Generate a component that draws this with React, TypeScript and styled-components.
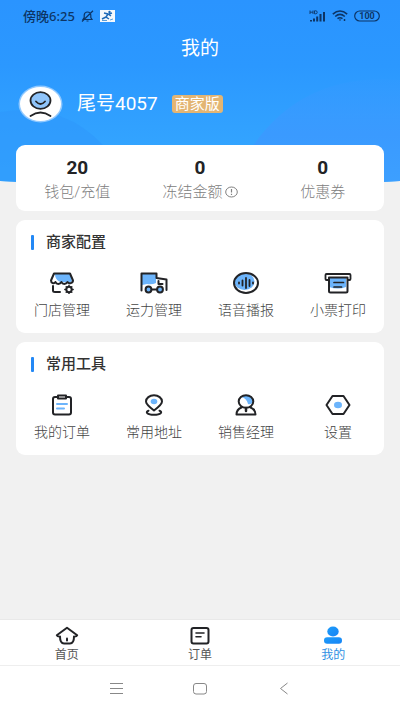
import React from "react";
import styled, { createGlobalStyle } from "styled-components";

const INK = "#222326";
const SKY = "#6cb4fb";

const GlobalStyle = createGlobalStyle`
  * { box-sizing: border-box; }
  body {
    margin: 0;
    background: #f1f1f1;
    font-family: Roboto, "Noto Sans CJK SC", sans-serif;
    -webkit-font-smoothing: antialiased;
  }
  button { font: inherit; color: inherit; background: none; border: 0; padding: 0; cursor: pointer; }
  svg { display: block; }
`;

const Screen = styled.div`
  position: relative;
  display: flex;
  flex-direction: column;
  min-height: 100vh;
`;

const Backdrop = styled.svg`
  position: absolute;
  top: 0;
  left: 0;
  width: 100%;
  height: 188px;
`;

const StatusBar = styled.div`
  position: relative;
  display: flex;
  justify-content: space-between;
  align-items: center;
  height: 32px;
  padding: 0 20px 0 23px;
  color: #0d3566;
`;

const StatusGroup = styled.div`
  display: flex;
  align-items: center;
  gap: 6px;
`;

const Clock = styled.span`
  font-family: "Noto Sans", "Noto Sans CJK SC", sans-serif;
  font-size: 13px;
  line-height: 16px;
  font-weight: 500;
`;

const TitleBar = styled.h1`
  position: relative;
  margin: 0;
  height: 32px;
  text-align: center;
  font-size: 19px;
  line-height: 34px;
  font-weight: 400;
  color: #fff;
`;

const Profile = styled.section`
  position: relative;
  display: flex;
  align-items: center;
  height: 80px;
  padding: 0 18px;
`;

const UserName = styled.span`
  margin-left: 14px;
  font-size: 19px;
  line-height: 24px;
  color: #fff;
`;

const Badge = styled.span`
  margin-left: 14px;
  padding: 0 3px;
  border-radius: 3px;
  background: #e3b573;
  color: #fff;
  font-size: 15px;
  line-height: 18px;
`;

const Content = styled.main`
  position: relative;
  flex: 1;
  display: flex;
  flex-direction: column;
  gap: 9px;
  padding: 1px 16px 16px;
`;

const Card = styled.section`
  border-radius: 9px;
  background: #fff;
`;

const StatsCard = styled(Card)`
  display: grid;
  grid-template-columns: repeat(3, 1fr);
  padding: 12px 0 9px;
`;

const Stat = styled.button`
  display: flex;
  flex-direction: column;
  align-items: center;
  gap: 3px;
`;

const StatValue = styled.span`
  font-size: 19px;
  line-height: 22px;
  font-weight: 700;
  color: ${INK};
`;

const StatLabel = styled.span`
  display: flex;
  align-items: center;
  gap: 2px;
  font-size: 15px;
  line-height: 20px;
  font-weight: 300;
  color: #808080;
`;

const GroupCard = styled(Card)`
  padding: 12px 0 14px;
`;

const GroupTitle = styled.h2`
  display: flex;
  align-items: center;
  gap: 12px;
  margin: 0;
  padding-left: 15px;
  font-size: 15px;
  line-height: 20px;
  font-weight: 500;
  color: #333;
  &::before {
    content: "";
    width: 3px;
    height: 15px;
    border-radius: 1px;
    background: #2388f5;
  }
`;

const Tools = styled.div`
  display: grid;
  grid-template-columns: repeat(4, 1fr);
  padding-top: 20px;
`;

const Tool = styled.button`
  display: flex;
  flex-direction: column;
  align-items: center;
  gap: 7px;
  font-size: 14px;
  line-height: 18px;
  font-weight: 300;
  color: #444;
`;

const TabBar = styled.nav`
  position: relative;
  display: grid;
  grid-template-columns: repeat(3, 1fr);
  height: 47px;
  border-top: 1px solid #e9e9e9;
  border-bottom: 1px solid #eee;
  background: #fff;
`;

const Tab = styled.button<{ $active?: boolean }>`
  display: flex;
  flex-direction: column;
  align-items: center;
  gap: 1px;
  padding-top: 6px;
  font-size: 12px;
  line-height: 16px;
  color: ${(p) => (p.$active ? "#2f8fe3" : "#555")};
`;

const SystemBar = styled.nav`
  position: relative;
  display: flex;
  justify-content: center;
  align-items: center;
  gap: 60px;
  height: 45px;
  background: #fff;
`;

const line = {
  fill: "none",
  stroke: INK,
  strokeWidth: 2,
  strokeLinecap: "round" as const,
  strokeLinejoin: "round" as const,
};

const toolIcons: Record<string, React.ReactNode> = {
  store: (
    <>
      <path d="M6 2h16l2 7c-2 2-4 2-6 1-4 1-10 0-11-7z" fill={SKY} />
      <path d="M6 1.500h16l3 7c0 2.500-4 4-5.500 1.500-1.500 2.500-5 2.500-6 0-1.500 2.500-5 2.500-6 0C6 12.500 3 11 3 8.500z" {...line} />
      <path d="M5 14v4.500Q5 20 7 20h5" {...line} />
      <circle cx="21" cy="17.500" r="2.700" {...line} />
      <path d="M21 13.200v1M21 20.800v1M16.800 17.500h1M24.200 17.500h1M18.200 14.700l.6.600M23.200 19.700l.6.600M18.200 20.300l.6-.6M23.200 15.300l.6-.6" {...line} strokeWidth="1.400" />
    </>
  ),
  truck: (
    <>
      <path d="M2 2h14v9q-4 2-9 1l-5 1z" fill={SKY} />
      <path d="M1.500 18.500v-17h15V6l10 1.500v10.500" {...line} />
      <path d="M18.500 9v3h4M12 17.500h5" {...line} />
      <circle cx="8.500" cy="17.500" r="2.900" {...line} fill={SKY} />
      <circle cx="20" cy="17.500" r="2.900" {...line} fill={SKY} />
    </>
  ),
  voice: (
    <>
      <ellipse cx="12.500" cy="9.500" rx="10" ry="8.500" fill={SKY} />
      <ellipse cx="14" cy="11" rx="12" ry="10" {...line} />
      <path d="M7 10.500v1M10.500 8.500v5M14 6v10M17.500 8v6M21 10.500v1" {...line} strokeWidth="1.800" />
    </>
  ),
  printer: (
    <>
      <path d="M5 5h17v10q-8 3-17 0z" fill={SKY} />
      <path d="M4 8H2.500Q1.500 8 1.500 7V3q0-1 1-1h23q1 0 1 1v4q0 1-1 1H24" {...line} strokeWidth="1.800" />
      <path d="M5 5.500h18.500v13.500q0 1.500-1.500 1.500H6.500q-1.500 0-1.500-1.500z" {...line} />
      <path d="M10 10.500h9.500M10 15h7.500" {...line} strokeWidth="1.700" />
    </>
  ),
  orders: (
    <>
      <rect x="5" y="3" width="18" height="17.500" rx="2" {...line} />
      <path d="M10 1.500h8v3h-8z" {...line} fill="#fff" />
      <path d="M9 10h10M9 14.500h7" {...line} stroke={SKY} />
    </>
  ),
  address: (
    <>
      <path d="M14 16.500C8 12 6 10 6 7.500 6 4 9.500 1.300 14 1.300S22 4 22 7.500c0 2.500-2 4.500-8 9z" {...line} />
      <ellipse cx="14" cy="7.500" rx="3.300" ry="2.800" fill={SKY} />
      <path d="M8.500 16.700C5 18 7 20.700 14 20.700S23 18 19.500 16.700" {...line} />
    </>
  ),
  manager: (
    <>
      <path d="M10 3q3-2 7-1 4 2 4 6-2 3-5 2-1-5-6-7z" fill={SKY} />
      <ellipse cx="14" cy="7.500" rx="7.300" ry="6.300" {...line} />
      <path d="M9.500 13.500Q4.500 15.500 4.500 20.500h19q0-5-5-7" {...line} />
      <path d="M14 14v3" {...line} strokeWidth="2.500" />
    </>
  ),
  settings: (
    <>
      <path d="M8.500 2h11l6 9-6 9h-11l-6-9z" {...line} />
      <ellipse cx="14" cy="11" rx="4" ry="3.300" fill={SKY} />
    </>
  ),
};

const stats = [
  { label: "钱包/充值", value: "20" },
  { label: "冻结金额", value: "0", hint: true },
  { label: "优惠券", value: "0" },
];

const groups = [
  {
    title: "商家配置",
    tools: [
      ["store", "门店管理"],
      ["truck", "运力管理"],
      ["voice", "语音播报"],
      ["printer", "小票打印"],
    ],
  },
  {
    title: "常用工具",
    tools: [
      ["orders", "我的订单"],
      ["address", "常用地址"],
      ["manager", "销售经理"],
      ["settings", "设置"],
    ],
  },
];

const StatusIcons = () => (
  <StatusGroup>
    <svg width="17" height="12" viewBox="0 0 17 12" fill="currentColor">
      <path d="M1 .5v3.500M4 .5v3.500M1 2.200h3M5.500.8v3M5.500.8h1.300q1.400 0 1.400 1.500T6.800 3.800H5.500" fill="none" stroke="currentColor" strokeWidth=".9" />
      <path d="M1 11.500V10h2v1.500zM4 11.500V8.500h2v3zM7.200 11.500V6.500h2v5zM10.500 11.500V4h2v7.500zM14 11.500V2h2v9.500z" />
    </svg>
    <svg width="16" height="12" viewBox="0 0 16 12" fill="none" stroke="currentColor" strokeWidth="1.600">
      <path d="M.8 4.200Q8-2.200 15.200 4.200M3.200 6.500Q8 2.400 12.800 6.500M5.500 8.700Q8 6.700 10.500 8.700" />
      <path d="M6.800 9.600h2.400L8 11z" fill="currentColor" stroke="none" />
      <path d="M12.500 9v2M11.500 10h2" strokeWidth="1" />
    </svg>
    <svg width="26" height="12" viewBox="0 0 26 12">
      <rect x=".7" y="1" width="24.600" height="10" rx="5" fill="none" stroke="currentColor" strokeWidth="1.200" />
      <text x="13" y="9" textAnchor="middle" fontSize="9" fontWeight="700" fill="currentColor">100</text>
    </svg>
  </StatusGroup>
);

export default function App() {
  return (
    <Screen>
      <GlobalStyle />
      <Backdrop viewBox="0 0 400 188" preserveAspectRatio="none" aria-hidden="true">
        <defs>
          <linearGradient id="sky" x1="0" y1="0" x2="0" y2="1">
            <stop offset="0" stopColor="#2a94ff" />
            <stop offset=".35" stopColor="#2b98ff" />
            <stop offset="1" stopColor="#37aaff" />
          </linearGradient>
          <linearGradient id="hill" x1="0" y1="0" x2="0" y2="1">
            <stop offset="0" stopColor="#3a98ff" stopOpacity=".2" />
            <stop offset=".5" stopColor="#3a9aff" />
            <stop offset="1" stopColor="#3da0ff" />
          </linearGradient>
          <clipPath id="edge"><path d="M0 0h400v181Q200 194 0 181z" /></clipPath>
        </defs>
        <g clipPath="url(#edge)">
          <path d="M0 0h400v188H0z" fill="url(#sky)" />
          <path d="M0 112Q70 100 112 156L130 188H0z" fill="#2e97fb" opacity=".6" />
          <path d="M230 188Q280 70 400 80V188z" fill="url(#hill)" />
        </g>
      </Backdrop>

      <StatusBar>
        <StatusGroup>
          <Clock>傍晚6:25</Clock>
          <svg width="13" height="12" viewBox="0 0 13 12" fill="none" stroke="currentColor" strokeWidth="1.200" aria-hidden="true">
            <path d="M2 9.500h9L9.800 7.500V5Q9.500 2 6.500 2T3.200 5v2.500zM5.500 11h2M1 11.500L12 .8" />
          </svg>
          <svg width="15" height="12" viewBox="0 0 15 12" aria-hidden="true">
            <path d="M0 0h15v12H0z" fill="#f4f8fc" />
            <path d="M4 3l4 1 3 2M8 4L6 7l3 2M6 7l-4 2M9 4l3-1" fill="none" stroke="#1f6ab8" strokeWidth="1.500" />
            <circle cx="9.500" cy="2" r="1.200" fill="#1f6ab8" />
            <path d="M2 10.500h5M10 10l3-1" stroke="#5d9fd8" />
          </svg>
        </StatusGroup>
        <StatusIcons />
      </StatusBar>

      <TitleBar>我的</TitleBar>

      <Profile>
        <svg width="45" height="38" viewBox="0 0 45 38" role="img" aria-label="头像">
          <ellipse cx="22.500" cy="19" rx="22" ry="18.500" fill="#8fc8ff" />
          <ellipse cx="22.500" cy="19" rx="20.500" ry="17" fill="#fff" />
          <ellipse cx="22.500" cy="15.500" rx="10" ry="8.300" fill="#8fc4fa" stroke={INK} strokeWidth="1.800" />
          <path d="M18 16.500q4.500 5 9 0M12.500 31q10-7 20 0" {...line} strokeWidth="1.800" />
        </svg>
        <UserName>尾号4057</UserName>
        <Badge>商家版</Badge>
      </Profile>

      <Content>
        <StatsCard>
          {stats.map((s) => (
            <Stat key={s.label}>
              <StatValue>{s.value}</StatValue>
              <StatLabel>
                {s.label}
                {s.hint && (
                  <svg width="13" height="12" viewBox="0 0 13 12" fill="none" stroke="#808080" aria-hidden="true">
                    <ellipse cx="6.500" cy="6" rx="5.800" ry="5" />
                    <path d="M6.500 3v3.500M6.500 7.800v1.200" strokeWidth="1.200" />
                  </svg>
                )}
              </StatLabel>
            </Stat>
          ))}
        </StatsCard>

        {groups.map((g) => (
          <GroupCard key={g.title}>
            <GroupTitle>{g.title}</GroupTitle>
            <Tools>
              {g.tools.map(([icon, label]) => (
                <Tool key={label}>
                  <svg width="28" height="22" viewBox="0 0 28 22" aria-hidden="true">{toolIcons[icon]}</svg>
                  {label}
                </Tool>
              ))}
            </Tools>
          </GroupCard>
        ))}
      </Content>

      <TabBar>
        <Tab>
          <svg width="24" height="20" viewBox="0 0 24 20" aria-hidden="true">
            <path d="M12 1.800L1.800 9.300q.5 1.500 3.200 1.300Q5 17.500 9 17.500h6q4 0 4-6.900 2.700.2 3.200-1.300z" {...line} />
            <path d="M12 12.500v2" {...line} />
          </svg>
          首页
        </Tab>
        <Tab>
          <svg width="24" height="20" viewBox="0 0 24 20" aria-hidden="true">
            <rect x="3.500" y="2" width="17" height="15.500" rx="2" {...line} />
            <path d="M8 7h8M8 10.800h5" {...line} strokeWidth="1.600" />
          </svg>
          订单
        </Tab>
        <Tab $active aria-current="page">
          <svg width="24" height="20" viewBox="0 0 24 20" aria-hidden="true">
            <defs>
              <linearGradient id="me" x1="0" y1="0" x2="1" y2="1">
                <stop offset="0" stopColor="#1e9cfa" />
                <stop offset="1" stopColor="#1684f5" />
              </linearGradient>
            </defs>
            <ellipse cx="12" cy="5.500" rx="5.700" ry="4.900" fill="url(#me)" />
            <rect x="3" y="11.200" width="18" height="6.500" rx="3.200" fill="url(#me)" />
          </svg>
          我的
        </Tab>
      </TabBar>

      <SystemBar>
        <button aria-label="菜单">
          <svg width="24" height="16" viewBox="0 0 24 16" stroke="#888" fill="none">
            <path d="M6 2.500h13M6 7.500h13M6 12.500h13" />
          </svg>
        </button>
        <button aria-label="主屏幕">
          <svg width="24" height="16" viewBox="0 0 24 16" stroke="#888" fill="none">
            <rect x="5.500" y="2.500" width="13" height="10.500" rx="2.500" />
          </svg>
        </button>
        <button aria-label="返回">
          <svg width="24" height="16" viewBox="0 0 24 16" stroke="#888" fill="none">
            <path d="M15.500 2L8.500 7.500l7 5.500" />
          </svg>
        </button>
      </SystemBar>
    </Screen>
  );
}
